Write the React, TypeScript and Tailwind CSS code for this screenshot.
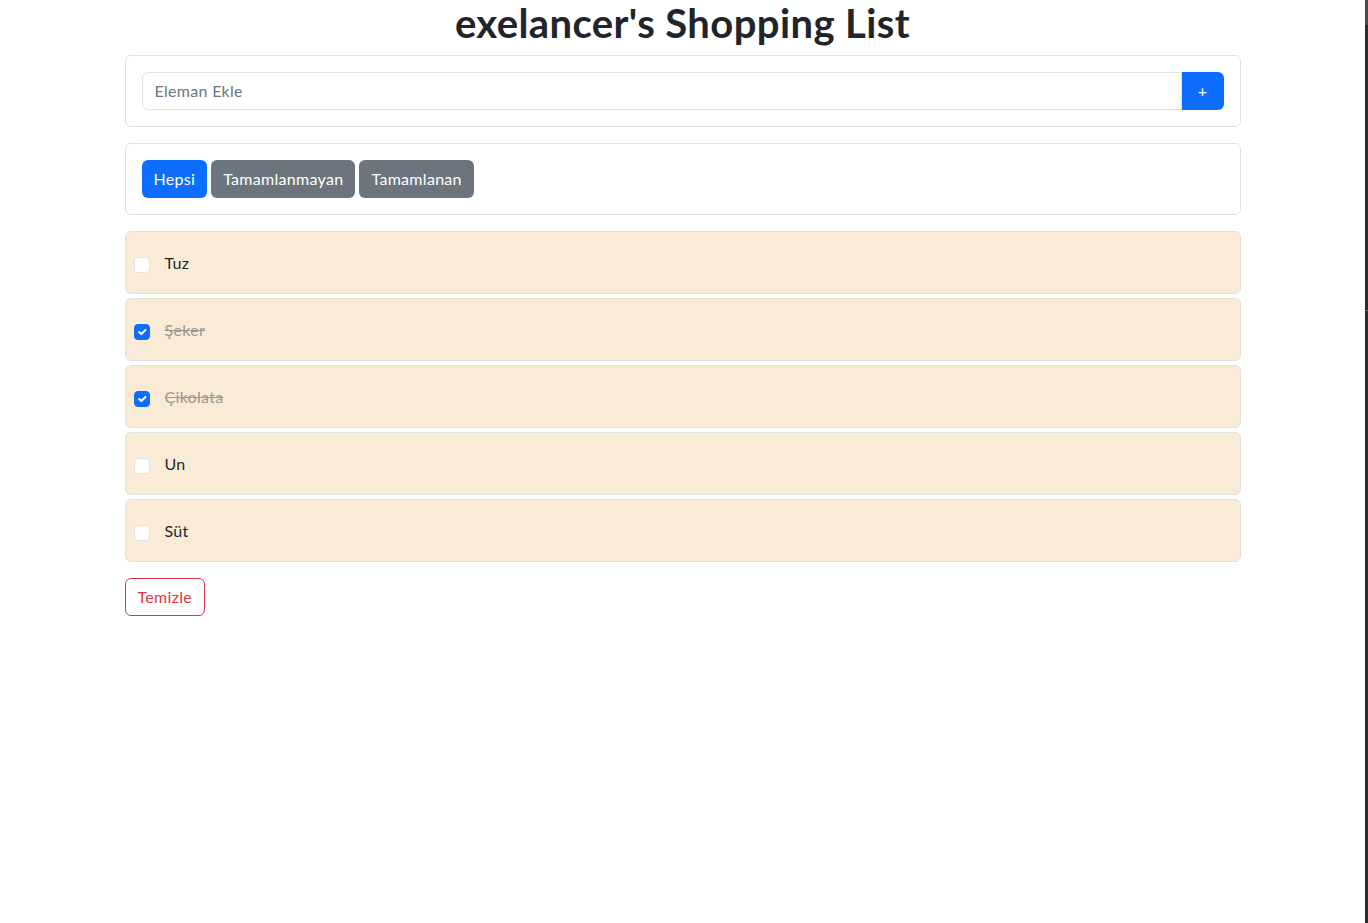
import { useState } from "react";

type Item = { id: number; name: string; done: boolean };

const initialItems: Item[] = [
  { id: 1, name: "Tuz", done: false },
  { id: 2, name: "Şeker", done: true },
  { id: 3, name: "Çikolata", done: true },
  { id: 4, name: "Un", done: false },
  { id: 5, name: "Süt", done: false },
];

const CheckBox = ({ checked, onClick }: { checked: boolean; onClick: () => void }) => (
  <button
    type="button"
    onClick={onClick}
    className={
      checked
        ? "mt-1 w-4 h-4 rounded-[4px] bg-[#0d6efd] border border-[#0d6efd] flex items-center justify-center shrink-0"
        : "mt-1 w-4 h-4 rounded-[4px] bg-white border border-[#dee2e6] shrink-0"
    }
  >
    {checked && (
      <svg viewBox="0 0 20 20" className="w-4 h-4">
        <path
          fill="none"
          stroke="#fff"
          strokeLinecap="round"
          strokeLinejoin="round"
          strokeWidth="3"
          d="m6 10 3 3 6-6"
        />
      </svg>
    )}
  </button>
);

export default function App() {
  const [items, setItems] = useState<Item[]>(initialItems);
  const [text, setText] = useState("");
  const [filter, setFilter] = useState<"all" | "open" | "done">("all");

  const shown = items.filter((it) =>
    filter === "all" ? true : filter === "open" ? !it.done : it.done
  );

  const addItem = () => {
    if (!text.trim()) return;
    setItems([...items, { id: Date.now(), name: text.trim(), done: false }]);
    setText("");
  };

  const filterBtn = (key: "all" | "open" | "done", label: string) => (
    <button
      type="button"
      onClick={() => setFilter(key)}
      className={
        filter === key
          ? "h-[38px] px-3 rounded-[6px] bg-[#0d6efd] text-white text-base tracking-[0.3px]"
          : "h-[38px] px-3 rounded-[6px] bg-[#6c757d] text-white text-base tracking-[0.3px]"
      }
    >
      {label}
    </button>
  );

  return (
    <div className="flex w-full min-h-screen bg-white font-['Lato',sans-serif] text-[#212529]">
      <div className="flex-1">
        <div className="w-[1116px] mx-auto">
          <h1 className="text-[40px] leading-[47px] font-bold text-center tracking-[0.4px] mb-2">
            exelancer's Shopping List
          </h1>

          <div className="border border-[#dee2e6] rounded-[6px] p-4 mb-4">
            <div className="flex h-[38px]">
              <input
                value={text}
                onChange={(e) => setText(e.target.value)}
                placeholder="Eleman Ekle"
                className="flex-1 border border-[#dee2e6] rounded-l-[6px] px-3 text-base tracking-[0.3px] outline-none placeholder:text-[#6c757d]"
              />
              <button
                type="button"
                onClick={addItem}
                className="w-[42px] bg-[#0d6efd] text-white rounded-r-[6px] text-base"
              >
                +
              </button>
            </div>
          </div>

          <div className="border border-[#dee2e6] rounded-[6px] p-4 mb-4">
            <div className="flex gap-[4px]">
              {filterBtn("all", "Hepsi")}
              {filterBtn("open", "Tamamlanmayan")}
              {filterBtn("done", "Tamamlanan")}
            </div>
          </div>

          <div className="flex flex-col gap-1">
            {shown.map((it) => (
              <div
                key={it.id}
                className="h-[63px] flex items-center gap-[15px] pl-2 bg-[#faebd7] border border-[#e2e0dc] rounded-[6px]"
              >
                <CheckBox
                  checked={it.done}
                  onClick={() =>
                    setItems(items.map((x) => (x.id === it.id ? { ...x, done: !x.done } : x)))
                  }
                />
                <span
                  className={
                    it.done
                      ? "text-base tracking-[0.3px] line-through text-[#9a9896]"
                      : "text-base tracking-[0.3px] text-[#212529]"
                  }
                >
                  {it.name}
                </span>
              </div>
            ))}
          </div>

          <button
            type="button"
            onClick={() => setItems(items.filter((x) => !x.done))}
            className="mt-4 h-[38px] px-3 rounded-[6px] border border-[#dc3545] text-[#dc3545] text-base tracking-[0.3px]"
          >
            Temizle
          </button>
        </div>
      </div>
      <div className="w-[3px] shrink-0 bg-[#2b2b2b] flex flex-col">
        <div className="h-[25px] bg-[#4a4a4a]" />
        <div className="h-px mt-[285px] bg-[#6a6a6a]" />
      </div>
    </div>
  );
}
